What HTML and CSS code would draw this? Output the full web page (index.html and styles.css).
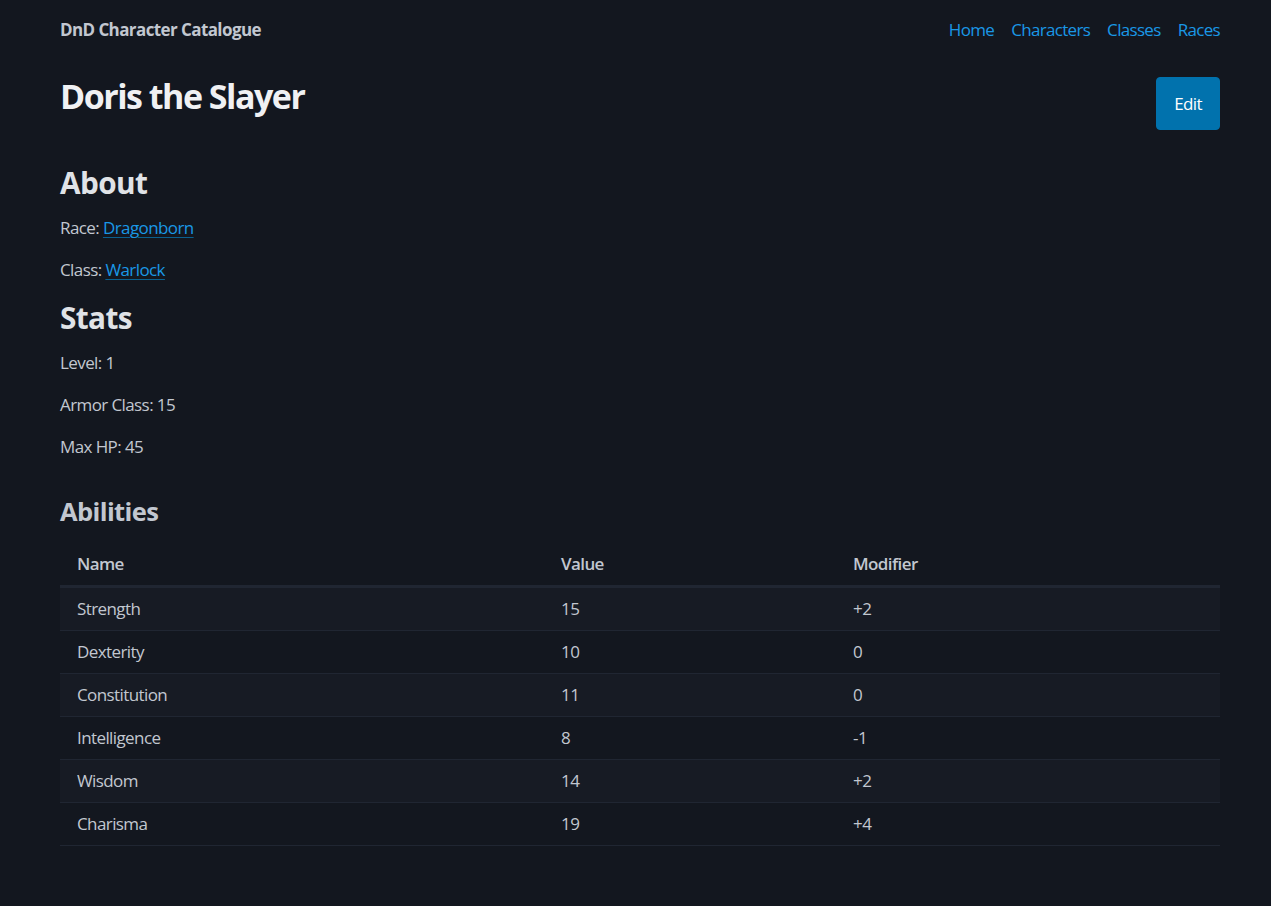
FILE: index.html
```html
<!DOCTYPE html>
<html lang="en">
<head>
<meta charset="utf-8">
<title>Doris the Slayer - DnD Character Catalogue</title>
<link rel="stylesheet" href="styles.css">
</head>
<body>
<div class="container">
  <nav class="topnav">
    <strong class="brand">DnD Character Catalogue</strong>
    <ul class="navlinks">
      <li><a href="#">Home</a></li>
      <li><a href="#">Characters</a></li>
      <li><a href="#">Classes</a></li>
      <li><a href="#">Races</a></li>
    </ul>
  </nav>
  <main>
    <div class="title-row">
      <h1>Doris the Slayer</h1>
      <a class="btn" href="#">Edit</a>
    </div>
    <h2 class="about">About</h2>
    <p>Race: <a class="ulink" href="#">Dragonborn</a></p>
    <p>Class: <a class="ulink" href="#">Warlock</a></p>
    <h2 class="stats">Stats</h2>
    <p>Level: 1</p>
    <p>Armor Class: 15</p>
    <p>Max HP: 45</p>
    <h3>Abilities</h3>
    <table class="abilities">
      <colgroup>
        <col class="c1"><col class="c2"><col class="c3">
      </colgroup>
      <thead>
        <tr><th>Name</th><th>Value</th><th>Modifier</th></tr>
      </thead>
      <tbody>
        <tr><td>Strength</td><td>15</td><td>+2</td></tr>
        <tr><td>Dexterity</td><td>10</td><td>0</td></tr>
        <tr><td>Constitution</td><td>11</td><td>0</td></tr>
        <tr><td>Intelligence</td><td>8</td><td>-1</td></tr>
        <tr><td>Wisdom</td><td>14</td><td>+2</td></tr>
        <tr><td>Charisma</td><td>19</td><td>+4</td></tr>
      </tbody>
    </table>
  </main>
</div>
</body>
</html>
```

FILE: styles.css
```css
html {
  font-size: 17px;
  background: #13171f;
}
body {
  margin: 0;
  background: #13171f;
  color: #c2c7d0;
  font-family: "Open Sans", "Noto Sans", sans-serif;
  font-size: 1rem;
  line-height: 25px;
  letter-spacing: -0.035em;
}
.container {
  width: 1160px;
  margin: 0 51px 0 60px;
}
a {
  color: #1a98e6;
  text-decoration: none;
}
.topnav {
  box-sizing: border-box;
  height: 60px;
  padding-bottom: 2px;
  display: flex;
  align-items: center;
  justify-content: space-between;
}
.brand {
  font-weight: 700;
  color: #c2c7d0;
}
.navlinks {
  list-style: none;
  margin: 0;
  padding: 0;
  display: flex;
  gap: 17px;
  letter-spacing: -0.04em;
}
.title-row {
  margin-top: 17px;
  display: flex;
  justify-content: space-between;
  align-items: flex-start;
}
h1, h2, h3 {
  font-weight: 700;
  line-height: 1.125;
  margin: 0;
}
h1 {
  font-size: 34px;
  color: #f0f1f3;
  letter-spacing: -0.044em;
}
h2 {
  font-size: 29.75px;
  color: #e0e3e7;
  margin-bottom: 16px;
}
h2.about {
  margin-top: 36.5px;
}
h2.stats {
  margin-top: 18.5px;
}
h3 {
  font-size: 25.5px;
  color: #c2c7d0;
  margin-top: 38px;
  margin-bottom: 16.5px;
}
p {
  margin: 0 0 17px;
}
.ulink {
  text-decoration: underline;
  text-decoration-color: rgba(1, 170, 255, 0.5);
  text-underline-offset: 3px;
}
.btn {
  display: inline-block;
  background: #0172ad;
  border: 1px solid #0172ad;
  color: #ffffff;
  border-radius: 4px;
  padding: 12.75px 17px;
}
.abilities {
  width: 100%;
  border-collapse: collapse;
  border-spacing: 0;
  table-layout: fixed;
}
.c1 { width: 484px; }
.c2 { width: 292px; }
.c3 { width: 384px; }
.abilities th,
.abilities td {
  text-align: left;
  padding: 8.5px 17px;
  border-bottom: 1px solid #202632;
}
.abilities th {
  font-weight: 600;
  color: #c2c7d0;
  border-bottom: 3px solid #202632;
}
.abilities tbody tr:nth-child(odd) td {
  background: #171b24;
}
```
